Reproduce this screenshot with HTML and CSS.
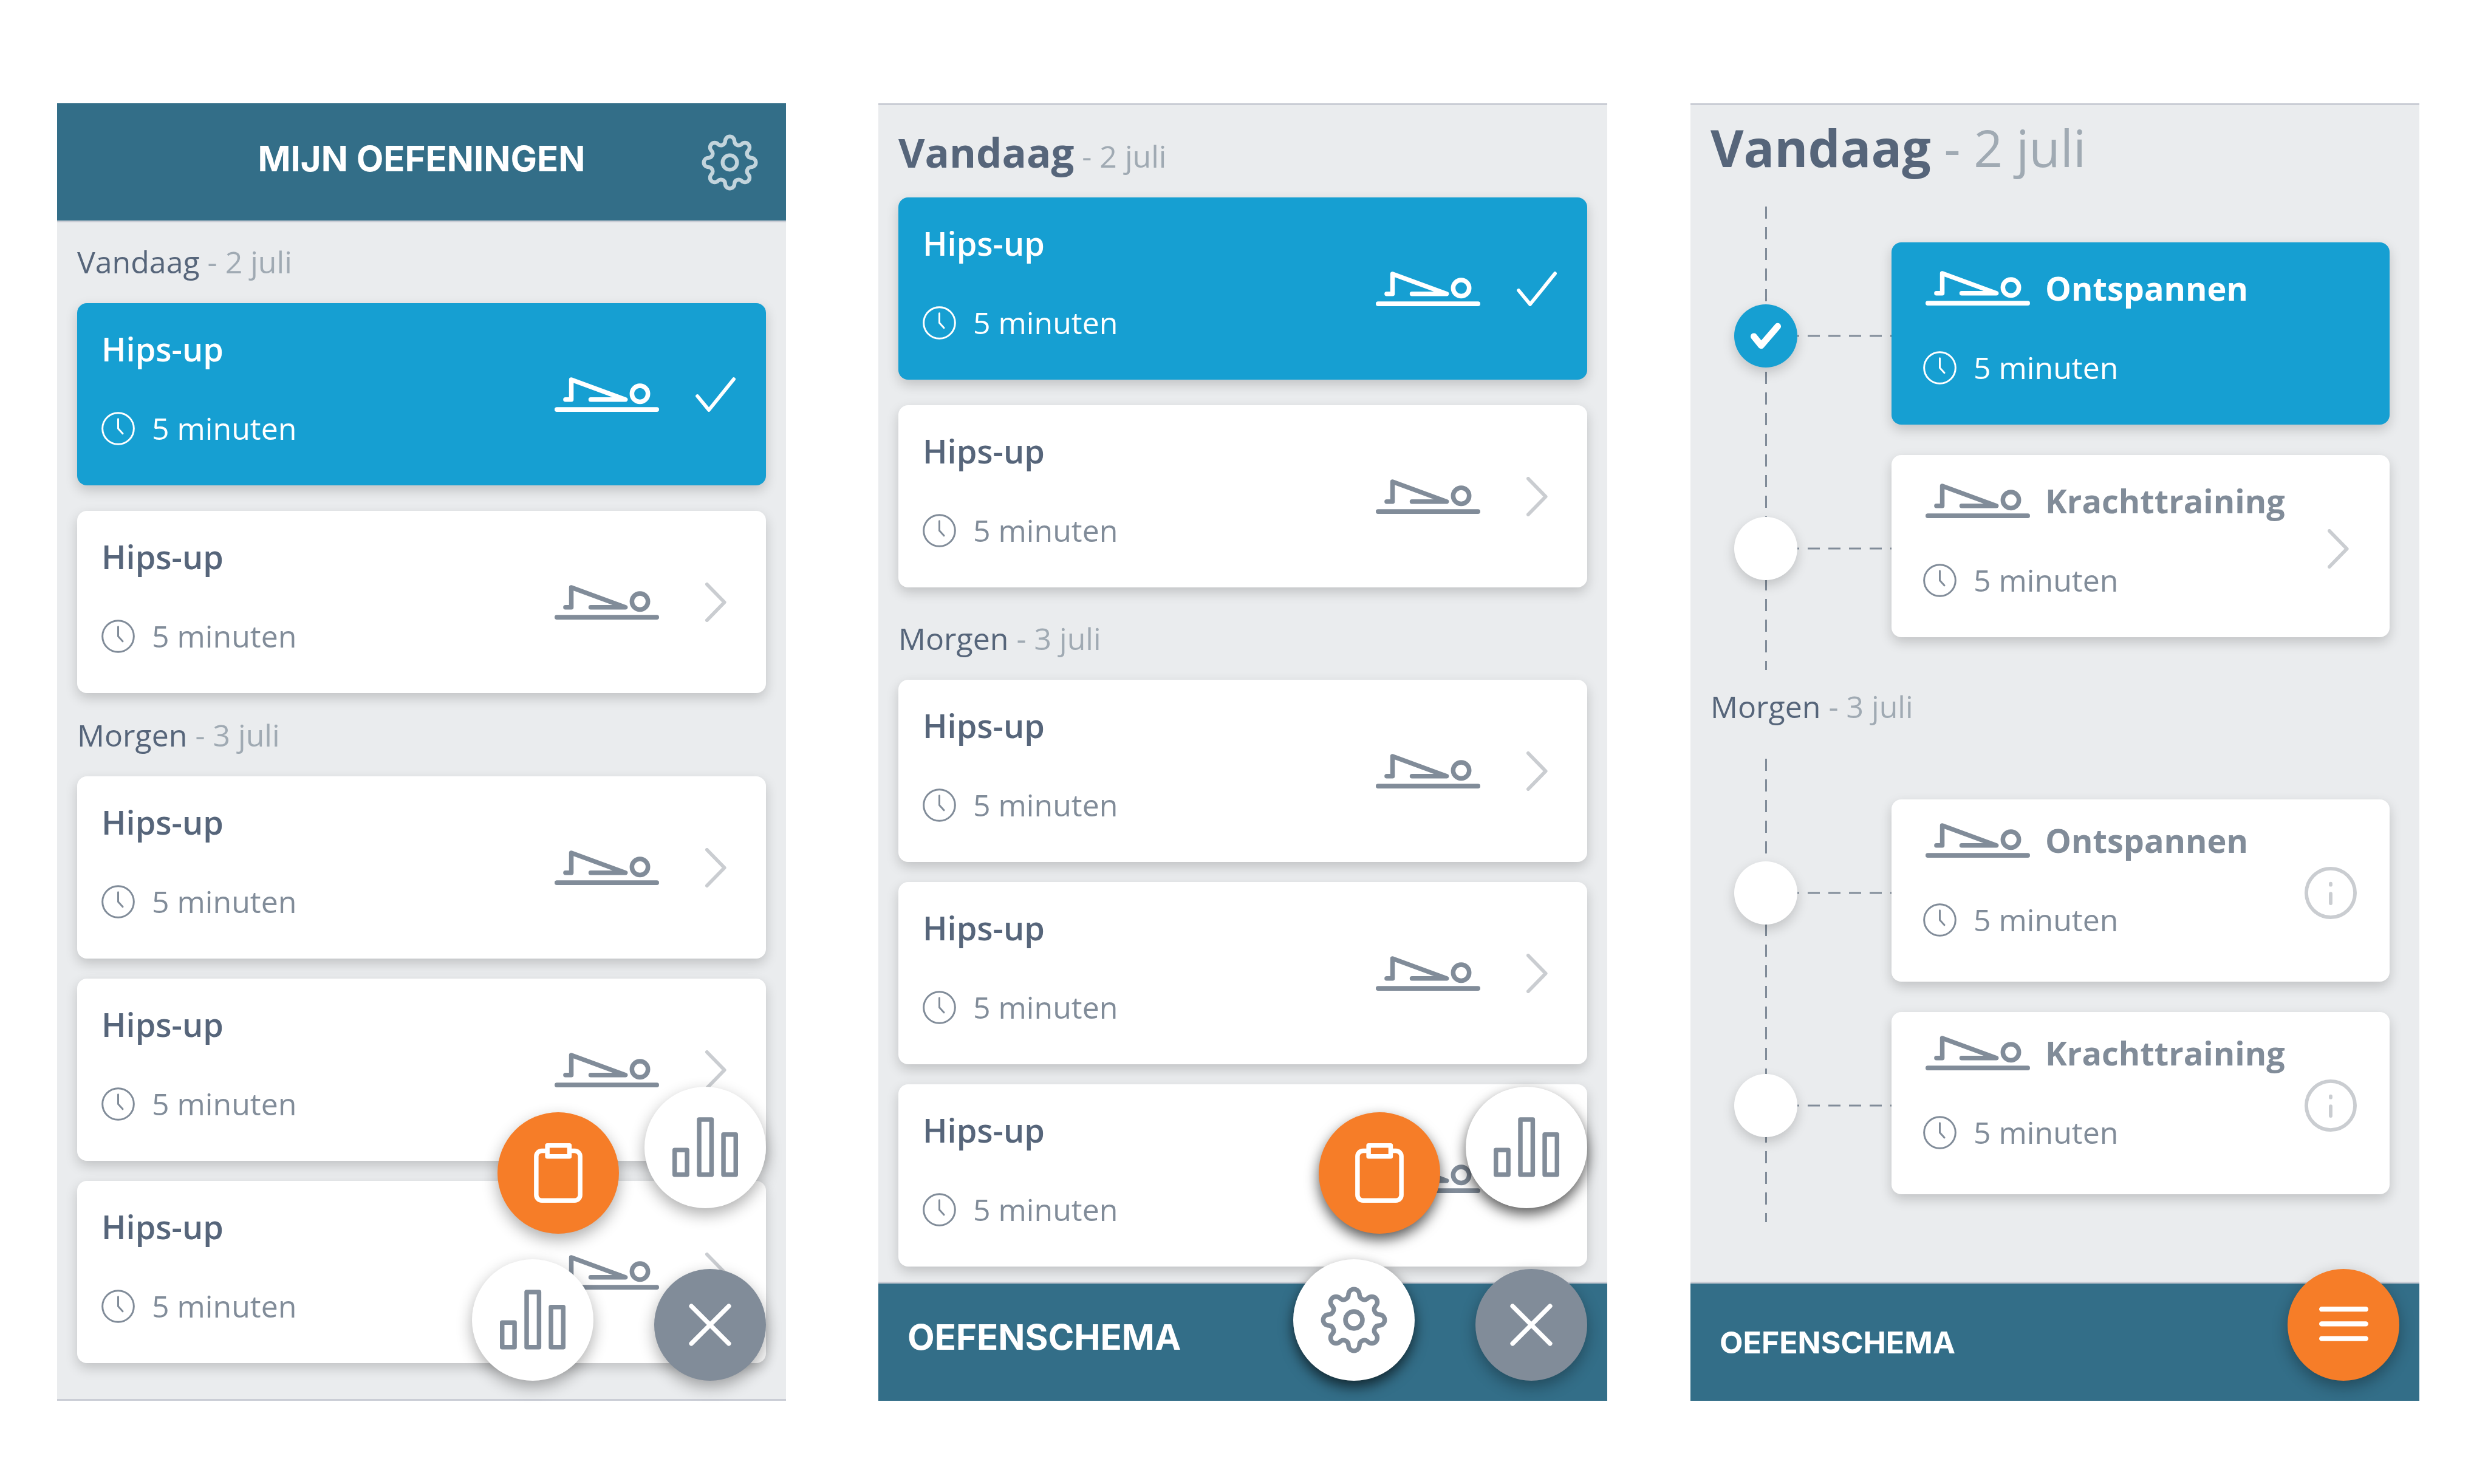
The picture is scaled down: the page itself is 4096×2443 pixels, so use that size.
FILE: index.html
```html
<!DOCTYPE html>
<html lang="nl">
<head>
<meta charset="utf-8">
<meta name="viewport" content="width=device-width, initial-scale=1">
<title>Mijn oefeningen</title>
<link rel="stylesheet" href="styles.css">
</head>
<body>
<svg class="sprite" aria-hidden="true">
  <symbol id="hips" viewBox="0 0 206 68">
    <g fill="none" stroke="currentColor" stroke-width="9" stroke-linecap="round" stroke-linejoin="round">
      <path d="M4.5 63.5H201.5M21.5 44H33V4.6L139.7 44H71.3"/>
      <circle cx="168.3" cy="32.5" r="15.8"/>
    </g>
  </symbol>
  <symbol id="clock" viewBox="0 0 66 66">
    <g fill="none" stroke="currentColor" stroke-width="3.6" stroke-linecap="round" stroke-linejoin="round">
      <circle cx="33" cy="33" r="31"/>
      <path d="M33 14V33L42 43"/>
    </g>
  </symbol>
  <symbol id="check" viewBox="0 0 79 68">
    <path d="M3.7 37L26.3 64.5L75.5 3.7" fill="none" stroke="currentColor" stroke-width="7" stroke-linecap="round" stroke-linejoin="round"/>
  </symbol>
  <symbol id="chevron" viewBox="0 0 42 78">
    <path d="M3.5 3.5L38 39L3.5 74.5" fill="none" stroke="currentColor" stroke-width="7" stroke-linecap="round" stroke-linejoin="round"/>
  </symbol>
  <symbol id="tick" viewBox="0 0 60 52">
    <path d="M6.5 27L21 45L53.5 7" fill="none" stroke="currentColor" stroke-width="13" stroke-linecap="round" stroke-linejoin="round"/>
  </symbol>
  <symbol id="info" viewBox="0 0 103 103">
    <g fill="none" stroke="currentColor" stroke-width="7" stroke-linecap="round">
      <circle cx="51.5" cy="51.5" r="48"/>
      <path d="M51.5 33V35.5M51.5 53V72"/>
    </g>
  </symbol>
  <symbol id="gear" viewBox="0 0 132 132">
    <g fill="none" stroke="currentColor" stroke-width="9" stroke-linejoin="round">
      <path d="M55.2 16A10.8 10.8 0 0 1 76.8 16A9.9 9.9 0 0 0 93.7 23A10.8 10.8 0 0 1 109 38.3A9.9 9.9 0 0 0 116 55.2A10.8 10.8 0 0 1 116 76.8A9.9 9.9 0 0 0 109 93.7A10.8 10.8 0 0 1 93.7 109A9.9 9.9 0 0 0 76.8 116A10.8 10.8 0 0 1 55.2 116A9.9 9.9 0 0 0 38.3 109A10.8 10.8 0 0 1 23 93.7A9.9 9.9 0 0 0 16 76.8A10.8 10.8 0 0 1 16 55.2A9.9 9.9 0 0 0 23 38.3A10.8 10.8 0 0 1 38.3 23A9.9 9.9 0 0 0 55.2 16Z"/>
      <circle cx="66" cy="66" r="16.8"/>
    </g>
  </symbol>
  <symbol id="chart" viewBox="0 0 130 121">
    <g fill="none" stroke="currentColor" stroke-width="9" stroke-linejoin="round">
      <path d="M4.5 65H29V113.8H4.5ZM53 4.5H77.5V113.8H53ZM101.2 34.4H125.5V113.8H101.2Z"/>
    </g>
  </symbol>
  <symbol id="clipboard" viewBox="0 0 96 118">
    <g fill="none" stroke="currentColor" stroke-width="9" stroke-linejoin="round">
      <path d="M26.5 15H15.5A11 11 0 0 0 4.5 26V102.5A11 11 0 0 0 15.5 113.5H80.5A11 11 0 0 0 91.5 102.5V26A11 11 0 0 0 80.5 15H70.2"/>
      <path d="M26.5 4.5H70.2V26.2H26.5Z"/>
    </g>
  </symbol>
  <symbol id="close" viewBox="0 0 84 84">
    <path d="M5 5L79 79M79 5L5 79" stroke="currentColor" stroke-width="9" stroke-linecap="round"/>
  </symbol>
  <symbol id="menu" viewBox="0 0 97 73">
    <path d="M5 5H92M5 34H92M5 63H92" stroke="currentColor" stroke-width="10" stroke-linecap="round"/>
  </symbol>
</svg>

<main class="board">
  <section class="screen" aria-label="Mijn oefeningen">
    <header class="bar bar--top">
      <h1 class="bar__title">MIJN OEFENINGEN</h1>
      <button class="bar__settings" type="button" aria-label="Instellingen"><svg class="icon-gear"><use href="#gear"/></svg></button>
    </header>
    <div class="list list--first">
      <h2 class="day">Vandaag <span class="day__date">- 2 juli</span></h2>
      <div class="cards cards--today">
        <a class="card card--done" href="#"><span class="card__text"><span class="card__name">Hips-up</span><span class="time"><svg class="icon-clock"><use href="#clock"/></svg>5 minuten</span></span><svg class="icon-hips"><use href="#hips"/></svg><span class="card__mark"><svg class="icon-check"><use href="#check"/></svg></span></a>
        <a class="card" href="#"><span class="card__text"><span class="card__name">Hips-up</span><span class="time"><svg class="icon-clock"><use href="#clock"/></svg>5 minuten</span></span><svg class="icon-hips"><use href="#hips"/></svg><span class="card__mark"><svg class="icon-chevron"><use href="#chevron"/></svg></span></a>
      </div>
      <h2 class="day day--next">Morgen <span class="day__date">- 3 juli</span></h2>
      <div class="cards">
        <a class="card" href="#"><span class="card__text"><span class="card__name">Hips-up</span><span class="time"><svg class="icon-clock"><use href="#clock"/></svg>5 minuten</span></span><svg class="icon-hips"><use href="#hips"/></svg><span class="card__mark"><svg class="icon-chevron"><use href="#chevron"/></svg></span></a>
        <a class="card" href="#"><span class="card__text"><span class="card__name">Hips-up</span><span class="time"><svg class="icon-clock"><use href="#clock"/></svg>5 minuten</span></span><svg class="icon-hips"><use href="#hips"/></svg><span class="card__mark"><svg class="icon-chevron"><use href="#chevron"/></svg></span></a>
        <a class="card" href="#"><span class="card__text"><span class="card__name">Hips-up</span><span class="time"><svg class="icon-clock"><use href="#clock"/></svg>5 minuten</span></span><svg class="icon-hips"><use href="#hips"/></svg><span class="card__mark"><svg class="icon-chevron"><use href="#chevron"/></svg></span></a>
      </div>
    </div>
    <button class="fab fab--upper" type="button" aria-label="Voortgang"><svg class="icon-chart"><use href="#chart"/></svg></button>
    <button class="fab fab--middle fab--orange" type="button" aria-label="Oefenschema"><svg class="icon-clipboard"><use href="#clipboard"/></svg></button>
    <button class="fab fab--lower" type="button" aria-label="Statistieken"><svg class="icon-chart"><use href="#chart"/></svg></button>
    <button class="fab fab--main fab--grey" type="button" aria-label="Sluiten"><svg class="icon-close"><use href="#close"/></svg></button>
  </section>

  <section class="screen screen--deep" aria-label="Oefenschema">
    <div class="list list--second">
      <h2 class="day"><strong class="day__today">Vandaag</strong> <span class="day__date">- 2 juli</span></h2>
      <div class="cards cards--today">
        <a class="card card--done" href="#"><span class="card__text"><span class="card__name">Hips-up</span><span class="time"><svg class="icon-clock"><use href="#clock"/></svg>5 minuten</span></span><svg class="icon-hips"><use href="#hips"/></svg><span class="card__mark"><svg class="icon-check"><use href="#check"/></svg></span></a>
        <a class="card" href="#"><span class="card__text"><span class="card__name">Hips-up</span><span class="time"><svg class="icon-clock"><use href="#clock"/></svg>5 minuten</span></span><svg class="icon-hips"><use href="#hips"/></svg><span class="card__mark"><svg class="icon-chevron"><use href="#chevron"/></svg></span></a>
      </div>
      <h2 class="day day--next">Morgen <span class="day__date">- 3 juli</span></h2>
      <div class="cards">
        <a class="card" href="#"><span class="card__text"><span class="card__name">Hips-up</span><span class="time"><svg class="icon-clock"><use href="#clock"/></svg>5 minuten</span></span><svg class="icon-hips"><use href="#hips"/></svg><span class="card__mark"><svg class="icon-chevron"><use href="#chevron"/></svg></span></a>
        <a class="card" href="#"><span class="card__text"><span class="card__name">Hips-up</span><span class="time"><svg class="icon-clock"><use href="#clock"/></svg>5 minuten</span></span><svg class="icon-hips"><use href="#hips"/></svg><span class="card__mark"><svg class="icon-chevron"><use href="#chevron"/></svg></span></a>
        <a class="card" href="#"><span class="card__text"><span class="card__name">Hips-up</span><span class="time"><svg class="icon-clock"><use href="#clock"/></svg>5 minuten</span></span><svg class="icon-hips"><use href="#hips"/></svg><span class="card__mark"><svg class="icon-chevron"><use href="#chevron"/></svg></span></a>
      </div>
    </div>
    <footer class="bar bar--bottom bar--raised">
      <h1 class="bar__title">OEFENSCHEMA</h1>
    </footer>
    <button class="fab fab--upper" type="button" aria-label="Voortgang"><svg class="icon-chart"><use href="#chart"/></svg></button>
    <button class="fab fab--middle fab--orange" type="button" aria-label="Oefenschema"><svg class="icon-clipboard"><use href="#clipboard"/></svg></button>
    <button class="fab fab--lower" type="button" aria-label="Instellingen"><svg class="icon-gear icon-gear--large"><use href="#gear"/></svg></button>
    <button class="fab fab--main fab--grey" type="button" aria-label="Sluiten"><svg class="icon-close"><use href="#close"/></svg></button>
  </section>

  <section class="screen" aria-label="Tijdlijn">
    <h2 class="day day--large"><strong class="day__name">Vandaag</strong> <span class="day__date">- 2 juli</span></h2>
    <ol class="timeline">
      <li class="step">
        <span class="node node--done"><svg class="icon-tick"><use href="#tick"/></svg></span>
        <svg class="connector"><line x1="0" y1="2" x2="100%" y2="2"/></svg>
        <a class="task task--done" href="#"><span class="task__name"><svg class="icon-hips"><use href="#hips"/></svg>Ontspannen</span><span class="time"><svg class="icon-clock"><use href="#clock"/></svg>5 minuten</span></a>
      </li>
      <li class="step">
        <span class="node"></span>
        <svg class="connector"><line x1="0" y1="2" x2="100%" y2="2"/></svg>
        <a class="task" href="#"><span class="task__name"><svg class="icon-hips"><use href="#hips"/></svg>Krachttraining</span><span class="time"><svg class="icon-clock"><use href="#clock"/></svg>5 minuten</span><span class="task__mark"><svg class="icon-chevron"><use href="#chevron"/></svg></span></a>
      </li>
    </ol>
    <h2 class="day day--between">Morgen <span class="day__date">- 3 juli</span></h2>
    <ol class="timeline timeline--next">
      <li class="step">
        <span class="node"></span>
        <svg class="connector"><line x1="0" y1="2" x2="100%" y2="2"/></svg>
        <a class="task" href="#"><span class="task__name"><svg class="icon-hips"><use href="#hips"/></svg>Ontspannen</span><span class="time"><svg class="icon-clock"><use href="#clock"/></svg>5 minuten</span><span class="task__mark"><svg class="icon-info"><use href="#info"/></svg></span></a>
      </li>
      <li class="step">
        <span class="node"></span>
        <svg class="connector"><line x1="0" y1="2" x2="100%" y2="2"/></svg>
        <a class="task" href="#"><span class="task__name"><svg class="icon-hips"><use href="#hips"/></svg>Krachttraining</span><span class="time"><svg class="icon-clock"><use href="#clock"/></svg>5 minuten</span><span class="task__mark"><svg class="icon-info"><use href="#info"/></svg></span></a>
      </li>
    </ol>
    <footer class="bar bar--bottom">
      <h1 class="bar__title bar__title--small">OEFENSCHEMA</h1>
    </footer>
    <button class="fab fab--main fab--orange" type="button" aria-label="Menu"><svg class="icon-menu"><use href="#menu"/></svg></button>
  </section>
</main>
</body>
</html>
```
FILE: styles.css
```css
:root {
  --teal: #336e88;
  --blue: #169fd2;
  --orange: #f67d28;
  --ink: #56657a;
  --grey: #818c99;
  --date: #a0aab3;
  --faint: #cacdd1;
  --line: #cacdd5;
  --ground: #eaecee;
}

* {
  box-sizing: border-box;
}

body {
  margin: 0;
  background: #fff;
  color: var(--ink);
  font-family: "Open Sans", sans-serif;
  font-size: 50px;
}

svg {
  display: block;
  flex: none;
}

.sprite {
  position: absolute;
  width: 0;
  height: 0;
}

.board {
  display: grid;
  grid-template-columns: 1200fr 152fr 1200fr 137fr 1200fr;
  padding: 170px 113px 138px 94px;
}

.screen {
  position: relative;
  display: flex;
  flex-direction: column;
  background: var(--ground);
  border-top: 3px solid var(--line);
}

.screen:nth-child(1) {
  grid-column: 1;
  border-top: 0;
  box-shadow: inset 0 -3px var(--line);
}

.screen:nth-child(2) {
  grid-column: 3;
}

.screen:nth-child(3) {
  grid-column: 5;
}

/* Bars */

.bar {
  display: flex;
  align-items: center;
  background: var(--teal);
  color: #fff;
}

.bar--top {
  position: relative;
  height: 196px;
  justify-content: center;
  padding-bottom: 12px;
  border-bottom: 3px solid var(--line);
}

.bar--bottom {
  height: 196px;
  margin-top: auto;
  padding: 0 48px;
  border-top: 3px solid var(--line);
}

.bar--raised {
  padding-bottom: 18px;
}

.bar__title {
  margin: 0;
  font-family: Inter, sans-serif;
  font-size: 58px;
  font-weight: 700;
  line-height: 64px;
}

.bar__title--small {
  font-size: 50px;
}

.bar__settings {
  position: absolute;
  right: 46px;
  top: 51px;
  padding: 0;
  border: 0;
  background: none;
  color: #c2d4dc;
}

/* Day headings */

.day {
  margin: 0 0 36px;
  font-size: 50px;
  font-weight: 400;
  line-height: 64px;
}

.day__date {
  color: var(--date);
}

.day__today {
  font-size: 67px;
  font-weight: 700;
}

.day__name {
  font-weight: 700;
}

.day--next {
  margin-top: 37px;
}

.screen--deep .day--next {
  margin-top: 52px;
}

.day--large {
  margin: 38px 33px 65px;
  font-size: 84px;
}

.day--between {
  margin: 28px 33px 54px;
}

/* Exercise cards */

.list {
  padding: 0 33px;
}

.list--first {
  padding-top: 33px;
  padding-bottom: 62px;
}

.list--second {
  padding-top: 45px;
  padding-bottom: 25px;
}

.cards {
  display: grid;
  gap: 33px;
}

.cards--today {
  gap: 42px;
}

.card,
.task {
  height: 300px;
  border-radius: 16px;
  background: #fff;
  color: var(--grey);
  text-decoration: none;
  box-shadow: 0 8px 20px rgba(0, 0, 0, 0.18);
}

.card {
  display: flex;
  align-items: center;
  padding: 0 50px 0 40px;
}

.card__text {
  flex: 1;
  align-self: flex-start;
  display: grid;
  gap: 67px;
  padding-top: 43px;
}

.card__name {
  color: var(--ink);
  font-size: 54px;
  font-weight: 600;
  line-height: 64px;
}

.card__mark {
  display: flex;
  justify-content: center;
  width: 66px;
  margin-left: 60px;
  color: var(--faint);
}

.time {
  display: flex;
  align-items: center;
  gap: 28px;
  line-height: 64px;
}

.card--done,
.task--done {
  background: var(--blue);
}

.card--done,
.card--done .card__name,
.card--done .card__mark,
.task--done {
  color: #fff;
}

/* Timeline */

.timeline {
  display: grid;
  gap: 50px;
  margin: 0;
  padding: 59px 49px 54px 72px;
  list-style: none;
  background: repeating-linear-gradient(var(--grey) 0 20px, transparent 20px 34px) 123px 0 / 3px 100% no-repeat;
}

.timeline--next {
  padding-top: 67px;
  padding-bottom: 46px;
}

.step {
  display: flex;
  align-items: center;
}

.node {
  display: flex;
  align-items: center;
  justify-content: center;
  flex: none;
  width: 104px;
  height: 104px;
  margin-top: 8px;
  border-radius: 50%;
  background: #fff;
  color: #fff;
  box-shadow: 0 8px 20px rgba(0, 0, 0, 0.18);
}

.node--done {
  background: var(--blue);
}

.connector {
  width: 155px;
  height: 4px;
  margin-top: 8px;
  stroke: var(--grey);
  stroke-width: 3px;
  stroke-dasharray: 20 14;
  stroke-dashoffset: 17px;
}

.task {
  position: relative;
  flex: 1;
  display: grid;
  align-content: start;
  gap: 67px;
  padding: 43px 52px 0;
}

.timeline--next .task {
  padding-top: 35px;
}

.task__name {
  display: flex;
  align-items: center;
  gap: 25px;
  padding-left: 4px;
  font-size: 54px;
  font-weight: 700;
  line-height: 64px;
}

.task__mark {
  position: absolute;
  top: 8px;
  right: 41px;
  bottom: 0;
  display: flex;
  align-items: center;
  justify-content: center;
  width: 112px;
  color: var(--faint);
}

.task__mark .icon-chevron {
  margin-left: 25px;
}

/* Round floating buttons */

.fab {
  position: absolute;
  display: flex;
  align-items: center;
  justify-content: center;
  width: 200px;
  height: 200px;
  padding: 0;
  border: 0;
  border-radius: 50%;
  background: #fff;
  color: var(--grey);
  box-shadow: 0 10px 26px rgba(0, 0, 0, 0.32);
}

.screen--deep .fab {
  box-shadow: 0 10px 22px rgba(0, 0, 0, 0.65);
}

.fab--upper {
  right: 33px;
  bottom: 317px;
}

.fab--middle {
  right: 275px;
  bottom: 275px;
}

.fab--lower {
  right: 317px;
  bottom: 33px;
}

.fab--main,
.screen--deep .fab--main {
  right: 33px;
  bottom: 33px;
  width: 184px;
  height: 184px;
  box-shadow: 0 10px 26px rgba(0, 0, 0, 0.32);
}

.fab--orange {
  background: var(--orange);
  color: #fff;
}

.fab--grey {
  background: var(--grey);
  color: #fff;
}

/* Icons */

.icon-hips {
  width: 172px;
  height: 57px;
}

.icon-clock {
  width: 55px;
  height: 55px;
}

.icon-check {
  width: 66px;
  height: 57px;
}

.icon-chevron {
  width: 35px;
  height: 65px;
}

.icon-tick {
  width: 50px;
  height: 44px;
}

.icon-info {
  width: 86px;
  height: 86px;
}

.icon-gear {
  width: 93px;
  height: 93px;
}

.icon-gear--large {
  width: 110px;
  height: 110px;
}

.icon-chart {
  width: 108px;
  height: 101px;
}

.icon-clipboard {
  width: 80px;
  height: 98px;
}

.icon-close {
  width: 70px;
  height: 70px;
}

.icon-menu {
  width: 81px;
  height: 61px;
}
```
